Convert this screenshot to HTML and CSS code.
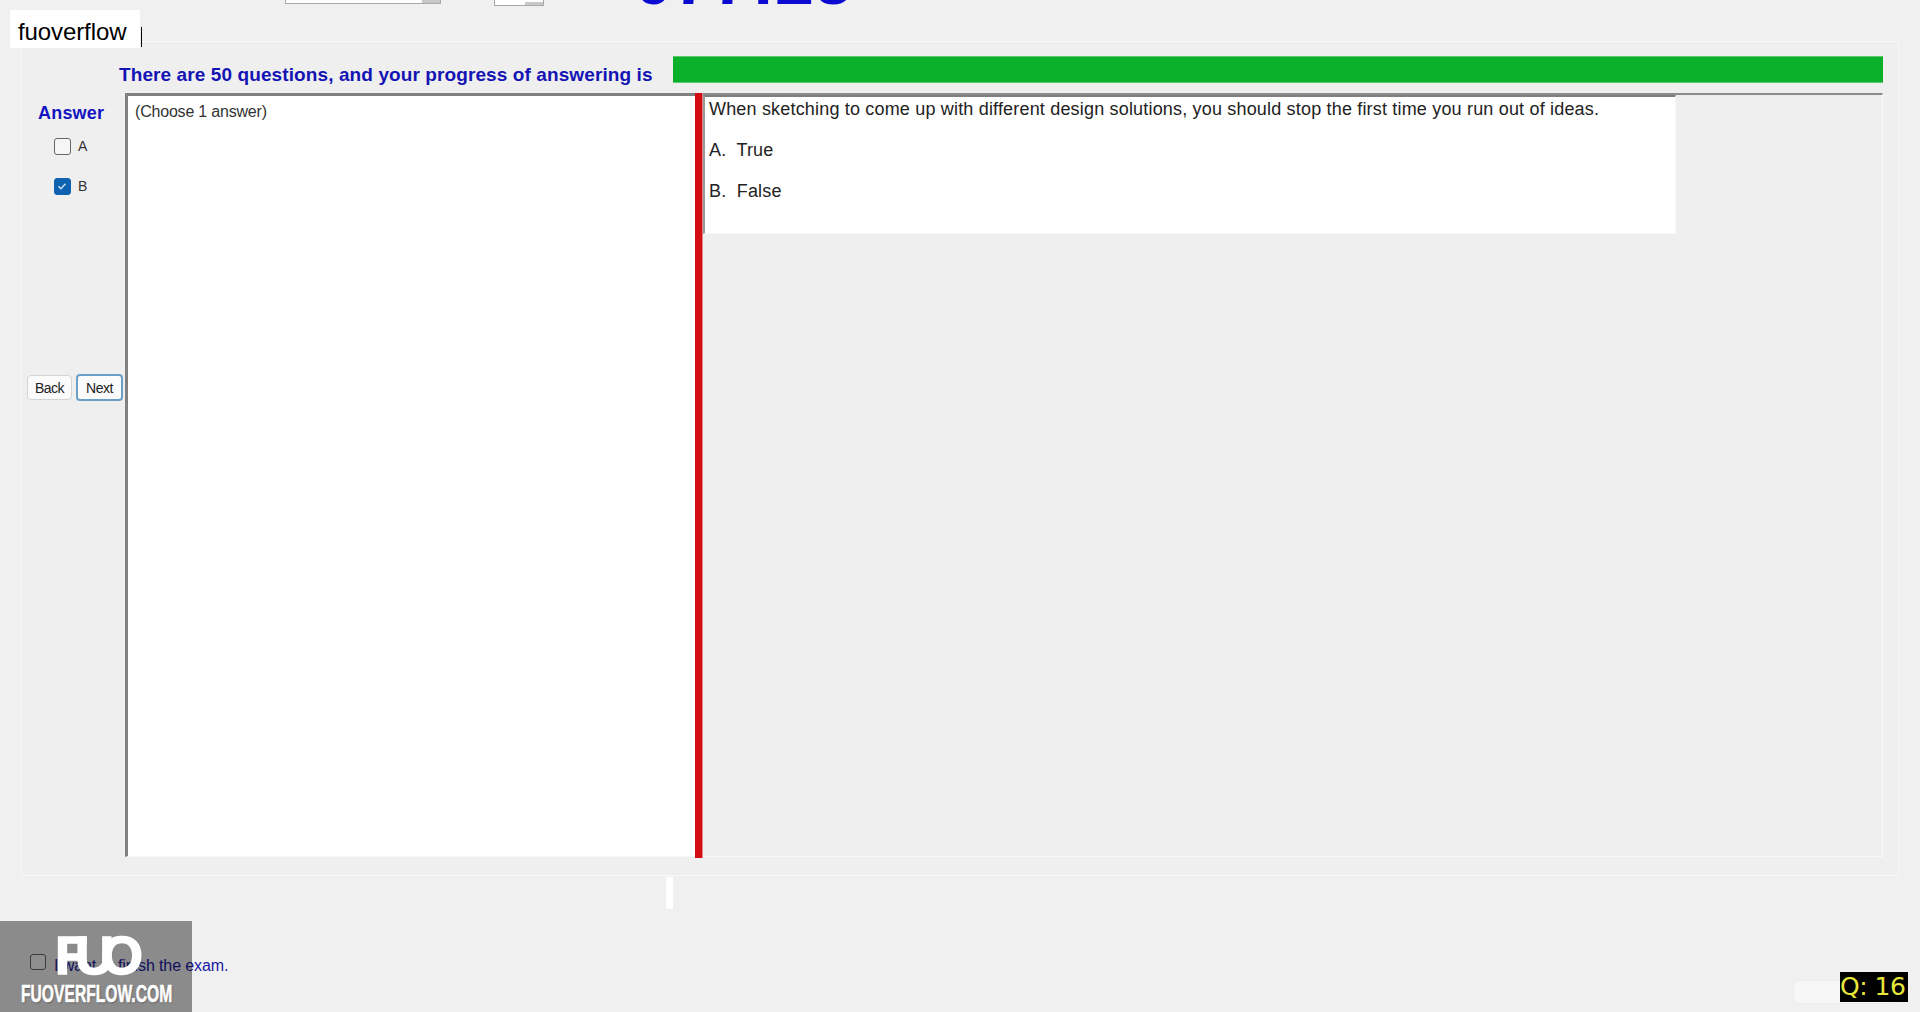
FILE: index.html
```html
<!DOCTYPE html>
<html lang="en">
<head>
<meta charset="utf-8">
<title>Exam</title>
<link rel="stylesheet" href="styles.css">
</head>
<body>
<header class="topbar">
  <div class="combo combo-wide"><span class="combo-arrow"></span></div>
  <div class="combo combo-small"><span class="combo-arrow"></span></div>
  <div class="timer">077:25</div>
</header>

<main class="group">
  <div class="progress-row">
    <div class="progress-label">There are 50 questions, and your progress of answering is</div>
    <div class="progress-bar"></div>
  </div>
  <div class="exam-row">
    <aside class="sidebar">
      <div class="answer-title">Answer</div>
      <label class="option"><span class="box"></span><span>A</span></label>
      <label class="option option-b"><span class="box box-checked"><svg viewBox="0 0 16 16" width="16" height="16"><path d="M4.5 8.3l2.4 2.4 4.6-5" fill="none" stroke="#cfe3f5" stroke-width="1.4"/></svg></span><span>B</span></label>
      <div class="nav-buttons">
        <button class="btn">Back</button>
        <button class="btn btn-focus">Next</button>
      </div>
    </aside>
    <section class="choose-pane">(Choose 1 answer)</section>
    <div class="divider"></div>
    <section class="question-area">
      <div class="question-box">
        <p class="q-line">When sketching to come up with different design solutions, you should stop the first time you run out of ideas.</p>
        <p class="q-line">A.&nbsp; True</p>
        <p class="q-line">B.&nbsp; False</p>
      </div>
    </section>
  </div>
</main>

<div class="splitter"></div>

<footer class="footer">
  <label class="finish"><span class="box box-finish"></span><span class="finish-text">I want to finish the exam.</span></label>
  <button class="btn-exit">E</button>
</footer>

<div class="site-label">fuoverflow<span class="caret"></span></div>
<div class="watermark">
  <div class="wm-logo">FUO</div>
  <div class="wm-site">FUOVERFLOW.COM</div>
</div>
<div class="q-badge">Q: 16</div>
</body>
</html>
```
FILE: styles.css
```css
* { box-sizing: border-box; }
html, body { margin: 0; padding: 0; }
body {
  position: relative;
  width: 1920px;
  height: 1012px;
  overflow: hidden;
  background: #f0f0f0;
  font-family: "Liberation Sans", Arial, sans-serif;
  color: #222;
}
p { margin: 0; }

.topbar {
  height: 8px;
  padding-left: 285px;
  display: flex;
  align-items: flex-end;
}
.combo {
  position: relative;
  background: #fff;
  border: 1px solid #a9a9a9;
  border-top: 0;
  height: 20px;
}
.combo-wide { width: 156px; margin-bottom: 4px; }
.combo-small { width: 50px; margin-left: 53px; margin-bottom: 2px; }
.combo-arrow {
  position: absolute;
  right: 0;
  bottom: 0;
  width: 18px;
  height: 3px;
  background: #c8c8c8;
}
.timer {
  margin-left: 90px;
  font-size: 70px;
  font-weight: 700;
  line-height: 1;
  height: 70px;
  margin-bottom: -7px;
  letter-spacing: 0.2px;
  color: #0a0ad2;
  flex: none;
}

.group {
  width: 1878px;
  height: 835px;
  margin: 33px 0 0 21px;
  padding: 14px 15px 0 0;
  border: 1px solid #f8f8f8;
  background: #efefef;
}
.progress-row {
  display: flex;
  align-items: center;
  height: 27px;
  margin-bottom: 10px;
}
.progress-label {
  width: 651px;
  padding: 10px 0 0 97px;
  font-size: 19px;
  font-weight: 700;
  letter-spacing: 0.1px;
  color: #1414b4;
  white-space: nowrap;
}
.progress-bar {
  flex: 1;
  height: 27px;
  background: #0aaf2a;
  border: 1px solid #5ccb70;
  border-width: 1px 0;
}

.exam-row {
  display: flex;
  height: 764px;
}
.sidebar {
  width: 103px;
  flex: none;
  padding-top: 10px;
}
.answer-title {
  padding-left: 16px;
  font-size: 18px;
  font-weight: 700;
  line-height: 20px;
  letter-spacing: 0.2px;
  color: #1414c0;
}
.option {
  display: flex;
  align-items: center;
  gap: 7px;
  margin: 15px 0 0 32px;
  height: 16px;
  font-size: 14px;
  color: #333;
}
.option-b { margin-top: 24px; }
.box {
  display: block;
  width: 17px;
  height: 17px;
  border: 1.5px solid #666;
  border-radius: 3px;
  background: #f6f6f6;
  flex: none;
}
.box-checked {
  background: #0f62b0;
  border-color: #0f62b0;
  padding: 0;
}
.box-checked svg { display: block; margin: -1px; }
.nav-buttons {
  display: flex;
  align-items: center;
  gap: 4px;
  margin: 180px 0 0 5px;
}
.btn {
  width: 45px;
  height: 25px;
  padding: 0;
  background: #fbfbfb;
  border: 1px solid #d4d4d4;
  border-radius: 4px;
  font: 14px "Liberation Sans", Arial, sans-serif;
  letter-spacing: -0.5px;
  color: #222;
}
.btn-focus {
  width: 47px;
  height: 27px;
  border: 2px solid #6aa0c8;
}

.choose-pane {
  width: 570px;
  flex: none;
  background: #fff;
  border-top: 3px solid #808080;
  border-left: 3px solid #808080;
  border-bottom: 1px solid #f8f8f8;
  padding: 5px 0 0 7px;
  font-size: 16px;
  line-height: 22px;
  letter-spacing: -0.2px;
  color: #333;
}
.divider {
  width: 8px;
  flex: none;
  background: #d40d12;
  border-right: 1px solid #d88;
  margin-bottom: -1px;
}
.question-area {
  flex: 1;
  border-top: 2px solid #8c8c8c;
  border-right: 1px solid #f8f8f8;
  border-bottom: 1px solid #f8f8f8;
}
.question-box {
  width: 973px;
  height: 139px;
  background: #fff;
  border-top: 2px solid #808080;
  border-left: 2px solid #9a9a9a;
  border-right: 1px solid #f8f8f8;
  border-bottom: 1px solid #f8f8f8;
  padding: 2px 0 0 4px;
  font-size: 18px;
  line-height: 21px;
  letter-spacing: 0.18px;
  color: #222;
}
.q-line { margin-bottom: 20px; white-space: nowrap; }

.splitter {
  width: 7px;
  height: 32px;
  margin: 1px 0 0 666px;
  background: #fff;
}

.footer {
  display: flex;
  justify-content: space-between;
  height: 95px;
  padding: 0 23px 0 30px;
}
.finish {
  display: flex;
  align-items: flex-start;
  gap: 8px;
  height: 16px;
  margin-top: 45px;
}
.box-finish { width: 16px; height: 16px; }
.finish-text {
  padding-top: 3px;
  font-size: 16px;
  line-height: 18px;
  color: #1a1aa0;
  letter-spacing: -0.1px;
}
.btn-exit {
  align-self: flex-end;
  width: 104px;
  height: 24px;
  padding: 0 0 0 27px;
  background: #f7f7f7;
  border: 1px solid #ececec;
  border-radius: 4px;
  font: 16px "Liberation Sans", Arial, sans-serif;
  color: #aaa;
}

.site-label {
  position: absolute;
  left: 10px;
  top: 10px;
  width: 130px;
  height: 38px;
  padding-left: 8px;
  background: #fff;
  color: #000;
  font-size: 24px;
  line-height: 44px;
  letter-spacing: -0.1px;
}
.caret {
  position: absolute;
  left: 131px;
  top: 17px;
  width: 1px;
  height: 20px;
  background: #000;
}

.watermark {
  position: absolute;
  left: 0;
  top: 921px;
  width: 192px;
  height: 91px;
  background: rgba(0, 0, 0, 0.42);
  color: #fff;
}
.wm-logo {
  position: absolute;
  left: 55px;
  top: 7px;
  font-size: 54px;
  font-weight: 700;
  line-height: 54px;
  letter-spacing: -13px;
  -webkit-text-stroke: 1.5px #fff;
}
.wm-site {
  position: absolute;
  left: 21px;
  top: 60px;
  font-size: 23px;
  font-weight: 700;
  line-height: 26px;
  white-space: nowrap;
  transform: scaleX(0.68);
  transform-origin: left center;
  -webkit-text-stroke: 0.6px #fff;
  text-shadow: 1px 1px 2px rgba(0, 0, 0, 0.4);
}

.q-badge {
  position: absolute;
  left: 1840px;
  top: 972px;
  width: 68px;
  height: 30px;
  background: #000;
  color: #e8e83a;
  font-family: "DejaVu Sans", sans-serif;
  font-size: 25px;
  line-height: 29px;
  letter-spacing: -0.5px;
  white-space: nowrap;
  overflow: hidden;
}
```
